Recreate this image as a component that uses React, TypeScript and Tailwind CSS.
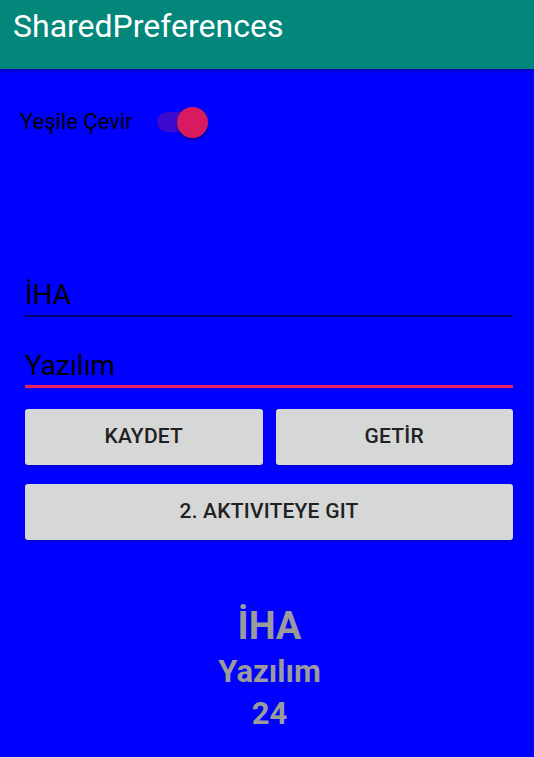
import { useState } from 'react';

export default function App() {
  const [green, setGreen] = useState(true);
  const [name, setName] = useState('İHA');
  const [dept, setDept] = useState('Yazılım');

  return (
    <div className="w-[534px] h-[757px] bg-[#0000ff] flex flex-col font-['Roboto',sans-serif] overflow-hidden">
      <header className="h-[69px] shrink-0 bg-[#02877a] flex items-start pl-[13px] pt-[6px] shadow-[0_2px_4px_rgba(0,0,0,0.3)]">
        <h1 className="text-white text-[32px] leading-[40px]">SharedPreferences</h1>
      </header>

      <div className="flex items-center pl-[20px] pt-[37px] gap-[24px]">
        <span className="text-black text-[22px] leading-[32px]">Yeşile Çevir</span>
        <button
          type="button"
          onClick={() => setGreen(!green)}
          className="relative w-[52px] h-[32px] flex items-center"
        >
          <span className="absolute left-0 w-[40px] h-[20px] rounded-full bg-[#3d0ad1]" />
          <span
            className={`absolute w-[31px] h-[31px] rounded-full bg-[#d81b60] shadow-[0_2px_3px_rgba(0,0,0,0.4)] ${green ? 'left-[20px]' : 'left-[-4px]'}`}
          />
        </button>
      </div>

      <div className="pl-[25px] pr-[21px] pt-[131px] flex flex-col">
        <input
          value={name}
          onChange={(e) => setName(e.target.value)}
          className="h-[48px] bg-transparent outline-none text-[28px] text-black border-b-2 border-[#00006e] pt-[5px]"
        />
        <input
          value={dept}
          onChange={(e) => setDept(e.target.value)}
          className="mt-[22px] h-[49px] bg-transparent outline-none text-[28px] text-black border-b-[3px] border-[#e91e63] pt-[6px]"
        />

        <div className="grid grid-cols-2 gap-[13px] mt-[21px]">
          <button className="h-[56px] bg-[#d6d7d7] rounded-[3px] text-[21px] tracking-[0.01em] font-medium text-[#212121] shadow-[0_1px_2px_rgba(0,0,0,0.3)]">KAYDET</button>
          <button className="h-[56px] bg-[#d6d7d7] rounded-[3px] text-[21px] tracking-[0.01em] font-medium text-[#212121] shadow-[0_1px_2px_rgba(0,0,0,0.3)]">GETİR</button>
        </div>
        <button className="mt-[19px] h-[56px] bg-[#d6d7d7] rounded-[3px] text-[21px] tracking-[0.01em] font-medium text-[#212121] shadow-[0_1px_2px_rgba(0,0,0,0.3)]">2. AKTIVITEYE GIT</button>
      </div>

      <div className="flex flex-col items-center mt-[62px] pl-[5px] text-[#9b9b9b] font-bold">
        <span className="text-[38px] leading-[48px]">{name}</span>
        <span className="text-[31px] leading-[42px] mt-[1px]">{dept}</span>
        <span className="text-[31px] leading-[42px]">24</span>
      </div>
    </div>
  );
}
